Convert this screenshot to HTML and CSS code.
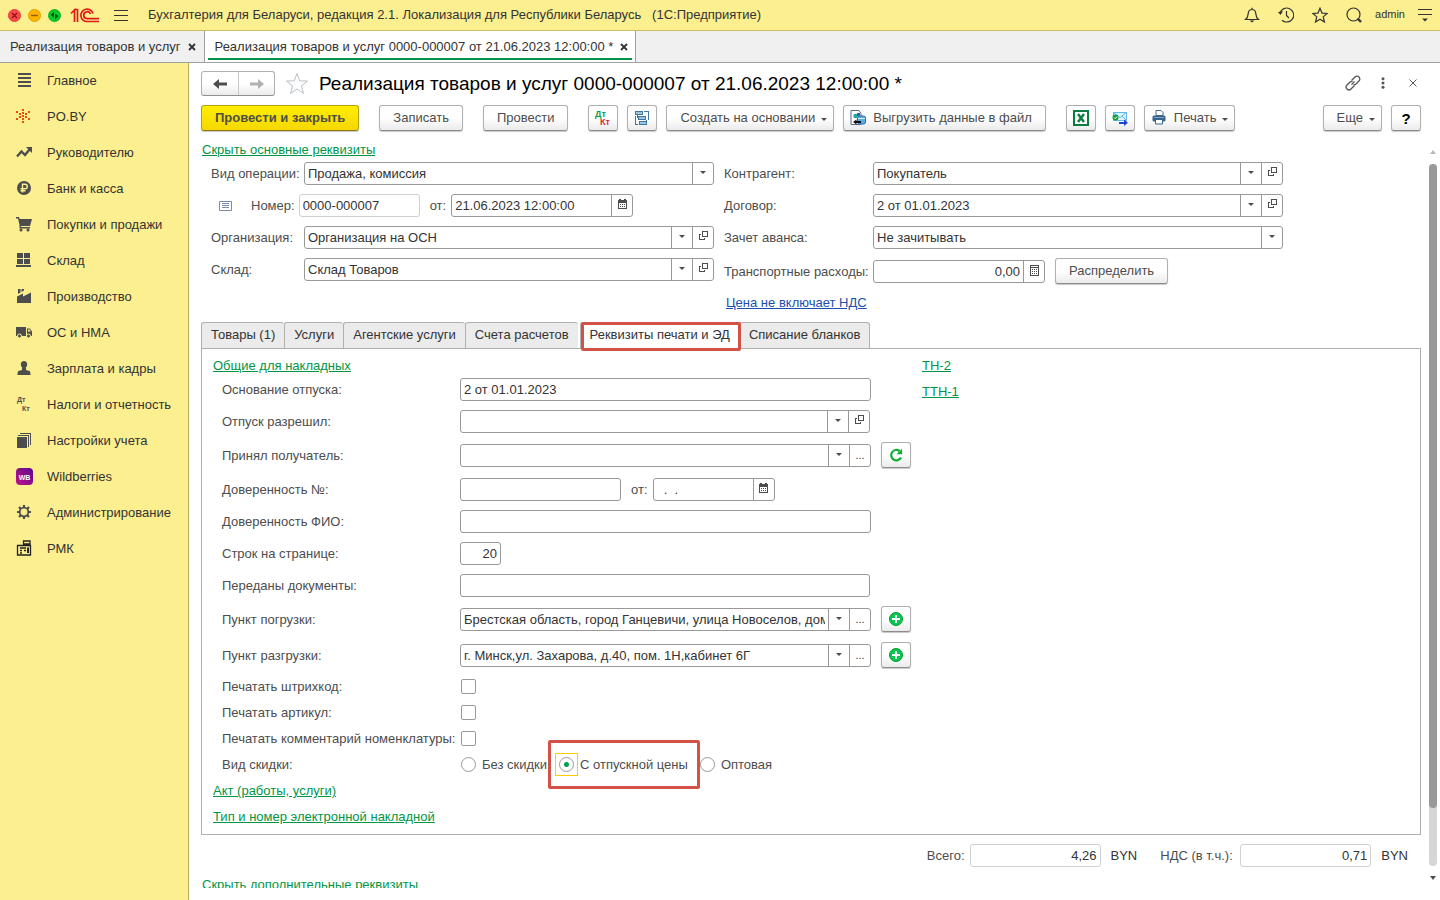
FILE: index.html
```html
<!DOCTYPE html>
<html lang="ru">
<head>
<meta charset="utf-8">
<title>Бухгалтерия для Беларуси</title>
<link rel="stylesheet" href="styles.css">
</head>
<body>
<svg class="sprite" aria-hidden="true">
  <symbol id="i-open" viewBox="0 0 11 11"><g fill="none" stroke="#4d4d4d" shape-rendering="crispEdges"><path d="M4.500 .5h5v5h-5z"/><path d="M3 3.500H1.500v5h5V7"/></g></symbol>
  <symbol id="i-cal" viewBox="0 0 11 11"><g shape-rendering="crispEdges"><path fill="#4d4d4d" d="M1 1h9v9H1z"/><path fill="#fff" d="M2 4h7v5H2zM4 0h1v1H4z"/><path fill="#4d4d4d" d="M2 0h2v2H2zM7 0h2v2H7zM3 5h1v1H3zM5 5h1v1H5zM7 5h1v1H7zM3 7h1v1H3zM5 7h1v1H5zM7 7h1v1H7z"/></g></symbol>
  <symbol id="i-calc" viewBox="0 0 11 11"><g shape-rendering="crispEdges"><path fill="#4d4d4d" d="M1 0h9v11H1z"/><path fill="#fff" d="M2 1h7v1H2zM2 3h7v7H2z"/><path fill="#4d4d4d" d="M3 4h1v1H3zM5 4h1v1H5zM7 4h1v1H7zM3 6h1v1H3zM5 6h1v1H5zM7 6h1v1H7zM3 8h1v1H3zM5 8h1v1H5zM7 8h1v1H7z"/></g></symbol>
  <symbol id="i-plus" viewBox="0 0 14 14"><circle cx="7" cy="7" r="6.500" fill="#00c853" stroke="#0a9a2a"/><path d="M7 3v8M3 7h8" stroke="#fff" stroke-width="2"/></symbol>
</svg>

<div class="app">
  <header class="topbar">
    <div class="lights">
      <button class="light" aria-label="Закрыть окно"><svg width="13" height="13" viewBox="0 0 13 13"><circle cx="6.500" cy="6.500" r="6" fill="#fc4a4a" stroke="#e03c3c"/><path d="M4 4l5 5M9 4l-5 5" stroke="#8f1010" stroke-width="1.200"/></svg></button>
      <button class="light" aria-label="Свернуть окно"><svg width="13" height="13" viewBox="0 0 13 13"><circle cx="6.500" cy="6.500" r="6" fill="#ffb400" stroke="#e29c00"/><path d="M3 6.500h7" stroke="#946000" stroke-width="1.500"/></svg></button>
      <button class="light" aria-label="Развернуть окно"><svg width="13" height="13" viewBox="0 0 13 13"><circle cx="6.500" cy="6.500" r="6" fill="#0ecb2c" stroke="#0ab022"/><path d="M6 2.500v6L2.500 6zM7 10.500v-6l3.500 2.500z" fill="#005c0a"/></svg></button>
    </div>
    <svg class="logo" width="30" height="15" viewBox="0 0 30 15"><g fill="none" stroke="#e01a1a" stroke-width="1.700"><path d="M1 5.500L4.500 2v12M4 1.500h3.500V14"/><path d="M23 5.500A6.200 6.200 0 1 0 17.300 13.500H29"/><path d="M20.500 6A3.500 3.500 0 1 0 17.300 10.700H29"/></g></svg>
    <button class="burger" aria-label="Меню"><svg width="14" height="11" viewBox="0 0 14 11"><path d="M0 .5h14M0 5.500h14M0 10.500h14" stroke="#333" shape-rendering="crispEdges"/></svg></button>
    <span class="app-title">Бухгалтерия для Беларуси, редакция 2.1. Локализация для Республики Беларусь &nbsp; (1С:Предприятие)</span>
    <nav class="top-icons">
      <button aria-label="Уведомления"><svg width="16" height="16" viewBox="0 0 16 16"><path d="M1.500 12.500C4 10.500 4 9 4.200 6.500 4.400 4 6 2.500 8 2.500s3.600 1.500 3.800 4C12 9 12 10.500 14.500 12.500zM8 .8v1.700" fill="none" stroke="#333" stroke-width="1.200"/><path d="M5.500 13.500h5L8 15.500z" fill="#333"/></svg></button>
      <button aria-label="История"><svg width="16" height="16" viewBox="1 0 16 16"><path d="M3 6A7 7 0 1 1 5 13.200M9.500 4v4.500l2.500 2.500" fill="none" stroke="#333" stroke-width="1.200"/><path d="M1 5l5-.7L3.500 8z" fill="#333"/></svg></button>
      <button aria-label="Избранное"><svg width="16" height="16" viewBox="0 0 16 16"><path d="M8 1.200l2 4.900 5.200.4-4 3.400 1.300 5.100L8 12.200 3.500 15l1.300-5.100-4-3.400L6 6.100z" fill="none" stroke="#333" stroke-width="1.200"/></svg></button>
      <button aria-label="Поиск"><svg width="16" height="16" viewBox="0 0 16 16"><circle cx="7.500" cy="7.500" r="6.500" fill="none" stroke="#333" stroke-width="1.200"/><path d="M11.500 11.500l3.500 3.500" stroke="#333" stroke-width="2.400"/></svg></button>
      <span class="user">admin</span>
      <button aria-label="Настройки"><svg width="14" height="14" viewBox="0 0 14 14"><path d="M0 1.500h14M0 6.500h14" stroke="#333" shape-rendering="crispEdges"/><path d="M4 10.500h6l-3 3z" fill="#333"/></svg></button>
    </nav>
  </header>

  <div class="window-tabs">
    <div class="wtab">Реализация товаров и услуг<button class="x" aria-label="Закрыть вкладку"><svg width="8" height="8" viewBox="0 0 8 8"><path d="M1 1l6 6M7 1L1 7" stroke="#333" stroke-width="1.800"/></svg></button></div>
    <div class="wtab active">Реализация товаров и услуг 0000-000007 от 21.06.2023 12:00:00 *<button class="x" aria-label="Закрыть вкладку"><svg width="8" height="8" viewBox="0 0 8 8"><path d="M1 1l6 6M7 1L1 7" stroke="#333" stroke-width="1.800"/></svg></button></div>
  </div>

  <div class="workspace">
    <nav class="sidebar">
      <a href="#"><svg viewBox="0 0 18 18"><path d="M3 3h13M3 7h13M3 11h13M3 15h13" stroke="#4d4d4d" stroke-width="2" shape-rendering="crispEdges"/></svg>Главное</a>
      <a href="#"><svg viewBox="0 0 18 18"><path fill="#e8500a" shape-rendering="crispEdges" d="M7 2h2v2H7zM7 5h2v2H7zM7 8h2v2H7zM7 11h2v2H7zM7 14h2v2H7zM1 4h2v2H1zM13 4h2v2h-2zM1 11h2v2H1zM13 11h2v2h-2zM4 6h2v2H4zM10 6h2v2h-2zM4 9h2v2H4zM10 9h2v2h-2z"/></svg>PO.BY</a>
      <a href="#"><svg viewBox="0 0 18 18"><path d="M2 13.500l4.500-5 3.500 3.500 4.500-5.500" fill="none" stroke="#4d4d4d" stroke-width="2.400"/><path d="M11 4h6v6z" fill="#4d4d4d"/></svg>Руководителю</a>
      <a href="#"><svg viewBox="0 0 18 18"><circle cx="9" cy="9" r="7" fill="#4d4d4d"/><path d="M7.500 13.500V5.200h2.500a2.300 2.300 0 0 1 0 4.600H5.500M5.500 11.800h5" fill="none" stroke="#fcef90" stroke-width="1.400"/></svg>Банк и касса</a>
      <a href="#"><svg viewBox="0 0 18 18"><path d="M1 2h3l.7 2H17l-2 7H6v1h9v1.500H4.500V10L3 3.500H1z" fill="#4d4d4d"/><circle cx="6" cy="15" r="1.500" fill="#4d4d4d"/><circle cx="13" cy="15" r="1.500" fill="#4d4d4d"/></svg>Покупки и продажи</a>
      <a href="#"><svg viewBox="0 0 18 18"><path fill="#4d4d4d" shape-rendering="crispEdges" d="M2 2h6v5H2zM9 2h6v5H9zM2 8h6v5H2zM9 8h6v5H9zM1 14h15v2H1z"/></svg>Склад</a>
      <a href="#"><svg viewBox="0 0 18 18"><path fill="#4d4d4d" d="M2 16V9.500l6-3v3l8-4V16zM3 2h2.500v3.500L3 7zM6.500 2H9v1.500L6.500 5z"/></svg>Производство</a>
      <a href="#"><svg viewBox="0 0 18 18"><path fill="#4d4d4d" d="M1 4h10v9H1zM12 5.500h3l2 3V13h-5z"/><path fill="#fcef90" d="M13 6.500h1.600l1.200 2H13z"/><g fill="#4d4d4d" stroke="#fcef90"><circle cx="4.500" cy="13" r="2"/><circle cx="13.500" cy="13" r="2"/></g></svg>ОС и НМА</a>
      <a href="#"><svg viewBox="0 0 18 18"><path fill="#4d4d4d" d="M9 2c2 0 3.200 1.400 3.200 3.200S11 9.500 9 9.500 5.800 7 5.800 5.200 7 2 9 2zM7 9h4v2l3.500 1c.8.500 1 2 1 4h-13c0-2 .2-3.500 1-4L7 11z"/></svg>Зарплата и кадры</a>
      <a href="#"><svg viewBox="0 0 18 18"><g font-family="Liberation Sans" font-size="7" font-weight="bold" fill="#4d4d4d"><text x="2" y="7">Дт</text><text x="7" y="16">Кт</text></g></svg>Налоги и отчетность</a>
      <a href="#"><svg viewBox="0 0 18 18"><path fill="#4d4d4d" d="M2 6h10v11H2z"/><path d="M3 4.500h10.500V16M5 2.500h10.500V14" fill="none" stroke="#4d4d4d" shape-rendering="crispEdges"/></svg>Настройки учета</a>
      <a href="#"><svg viewBox="0 0 18 18"><linearGradient id="wb" x1="0" y1="1" x2="1" y2="0"><stop offset="0" stop-color="#c0108c"/><stop offset="1" stop-color="#5a0a8c"/></linearGradient><rect x="1" y="1" width="17" height="17" rx="4" fill="url(#wb)"/><text x="9.500" y="12.500" text-anchor="middle" font-family="Liberation Sans" font-size="7" font-weight="bold" fill="#fff">WB</text></svg>Wildberries</a>
      <a href="#"><svg viewBox="0 0 18 18"><circle cx="9" cy="9" r="4.300" fill="none" stroke="#4d4d4d" stroke-width="1.800"/><path d="M9 2v2.500M9 13.500V16M2 9h2.500M13.500 9H16M4 4l2 2M12 12l2 2M14 4l-2 2M6 12l-2 2" stroke="#4d4d4d" stroke-width="2.200"/></svg>Администрирование</a>
      <a href="#"><svg viewBox="0 0 18 18"><g fill="none" stroke="#222" stroke-width="1.300"><path d="M2.500 6.500h13v9.500h-13zM8.500 2h6.500v3H8.500zM11.500 5v1.500"/><path d="M5 9h6M5 11.500h2M5 14h2M9 11.500h2"/></g><path fill="#222" d="M12 8.500h2V14h-2z"/></svg>РМК</a>
    </nav>

    <main class="doc">
      <div class="doc-head">
        <div class="history">
          <button aria-label="Назад"><svg width="14" height="10" viewBox="0 0 14 10"><path d="M0 5l6-5v3.500h8v3H6V10z" fill="#4d4d4d"/></svg></button>
          <button aria-label="Вперед"><svg width="14" height="10" viewBox="0 0 14 10"><path d="M14 5L8 0v3.500H0v3h8V10z" fill="#b0b0b0"/></svg></button>
        </div>
        <button class="fav" aria-label="В избранное"><svg width="24" height="23" viewBox="0 0 24 23"><path d="M12 1.500l2.700 7.300 7.800.3-6.100 4.800 2.100 7.500L12 17l-6.500 4.400 2.100-7.500-6.100-4.800 7.800-.3z" fill="none" stroke="#b8c0c8"/></svg></button>
        <h1>Реализация товаров и услуг 0000-000007 от 21.06.2023 12:00:00 *</h1>
        <div class="head-actions">
          <button aria-label="Ссылка"><svg width="16" height="16" viewBox="0 0 16 16"><g fill="none" stroke="#555" stroke-width="1.300"><path d="M6.500 5.500L10 2a2.800 2.800 0 0 1 4 4l-3 3a2.800 2.800 0 0 1-2.500.6"/><path d="M9.500 10.500L6 14a2.800 2.800 0 0 1-4-4l3-3a2.800 2.800 0 0 1 2.500-.6M6.500 9.500l3-3"/></g></svg></button>
          <button aria-label="Еще"><svg width="4" height="12" viewBox="0 0 4 12"><g fill="#555"><circle cx="2" cy="1.700" r="1.500"/><circle cx="2" cy="6" r="1.500"/><circle cx="2" cy="10.300" r="1.500"/></g></svg></button>
          <button aria-label="Закрыть"><svg width="8" height="8" viewBox="0 0 8 8"><path d="M.5.5l7 7M7.500.5l-7 7" stroke="#555"/></svg></button>
        </div>
      </div>

      <div class="commands">
        <div class="cmd-group"><button class="btn primary">Провести и закрыть</button></div>
        <div class="cmd-group"><button class="btn">Записать</button></div>
        <div class="cmd-group"><button class="btn">Провести</button></div>
        <div class="cmd-group">
          <button class="btn icon" aria-label="Проводки"><svg width="18" height="18" viewBox="0 0 18 18"><g font-family="Liberation Sans" font-size="9" font-weight="bold"><text x="1" y="8" fill="#0a9a48">Дт</text><text x="6" y="16" fill="#e02a2a">Кт</text></g></svg></button>
          <button class="btn icon" aria-label="Структура подчиненности"><svg width="16" height="16" viewBox="0 0 16 16"><g fill="#9cc4e0" stroke="#3a78a8" shape-rendering="crispEdges"><path d="M1.500 1.500h7v3h-7zM4.500 6.500h7v3h-7zM5.500 11.500h7v3h-7z"/><path d="M10 1.500h4.500V10M1.500 6v8.500H4M3.500 4.500v3M12.500 9.500v2" fill="none"/></g></svg></button>
          <button class="btn menu">Создать на основании<i class="caret"></i></button>
          <button class="btn pic"><svg width="16" height="17" viewBox="0 0 16 17"><path d="M1 1.500h8l2 3v11H1z" fill="#fff" stroke="#5a6a80"/><circle cx="5.500" cy="7" r="2.200" fill="#1fa6a0"/><path d="M7 4h3v3H7z" fill="#2468b0"/><rect x="7.500" y="7" width="8" height="8" rx="2" fill="#5aaee6" stroke="#2a6ea8"/><path d="M8 9.500h7" stroke="#d8efff"/><path d="M3 13l3.500-2.500V12H11v2H6.500v1.500z" fill="#111"/></svg>Выгрузить данные в файл</button>
        </div>
        <div class="cmd-group">
          <button class="btn icon" aria-label="Excel"><svg width="16" height="16" viewBox="0 0 16 16"><rect x="1" y="1" width="14" height="14" fill="#fff" stroke="#0b7d3e" stroke-width="2"/><path d="M5 4l6 8M11 4l-6 8" stroke="#0b7d3e" stroke-width="2.400"/></svg></button>
          <button class="btn icon" aria-label="Отправить"><svg width="16" height="16" viewBox="0 0 16 16"><path d="M1.500 2.500h13v8h-13z" fill="#dff2ff" stroke="#5cb8ee"/><path d="M1.500 2.500l6.500 5 6.500-5M2 10l4-4M14 10l-4-4" fill="none" stroke="#5cb8ee"/><circle cx="3.500" cy="7.500" r="3" fill="#12a03c"/><path d="M2 7.500l1.200 1.200L5.200 6.500" fill="none" stroke="#fff"/><path d="M7 12h5V9.500l4 3.200-4 3.300V14H7z" fill="#1a46d0"/></svg></button>
          <button class="btn pic menu"><svg width="16" height="15" viewBox="0 0 16 15"><path d="M5 .5h5l2 2v3H5z" fill="#fff" stroke="#4a6480"/><rect x="1.500" y="5.500" width="13" height="6" rx="1.500" fill="#36648c"/><path d="M4.500 9.500h7v4.500h-7z" fill="#fff" stroke="#36648c"/><path d="M3 7.500h10" stroke="#7fa6c6"/></svg>Печать<i class="caret"></i></button>
        </div>
        <div class="cmd-group end">
          <button class="btn menu">Еще<i class="caret"></i></button>
          <button class="btn icon help" aria-label="Справка">?</button>
        </div>
      </div>

      <div class="body">
        <div class="content">
          <a class="link" href="#">Скрыть основные реквизиты</a>

          <div class="main-form">
            <div class="col">
              <div class="row"><label for="op">Вид операции:</label>
                <div class="box w-main"><select id="op"><option>Продажа, комиссия</option></select><span class="cell over"><i class="caret"></i></span></div></div>
              <div class="row number-row">
                <svg class="status" width="13" height="10" viewBox="0 0 13 10"><path d="M.5.5h12v9H.5z" fill="#fff" stroke="#7a8ca8"/><path d="M3 2.500h7M3 4.500h7M3 6.500h7" stroke="#7a8ca8" shape-rendering="crispEdges"/></svg>
                <label for="num">Номер:</label>
                <div class="box w-number faint"><input id="num" value="0000-000007"></div>
                <label for="date" class="from">от:</label>
                <div class="box w-date"><input id="date" value="21.06.2023 12:00:00"><button class="cell" aria-label="Календарь"><svg width="11" height="11"><use href="#i-cal"/></svg></button></div>
              </div>
              <div class="row"><label for="org">Организация:</label>
                <div class="box w-main"><input id="org" value="Организация на ОСН"><button class="cell" aria-label="Выбрать"><i class="caret"></i></button><button class="cell" aria-label="Открыть"><svg width="11" height="11"><use href="#i-open"/></svg></button></div></div>
              <div class="row"><label for="store">Склад:</label>
                <div class="box w-main"><input id="store" value="Склад Товаров"><button class="cell" aria-label="Выбрать"><i class="caret"></i></button><button class="cell" aria-label="Открыть"><svg width="11" height="11"><use href="#i-open"/></svg></button></div></div>
            </div>
            <div class="col right">
              <div class="row"><label for="agent">Контрагент:</label>
                <div class="box w-main"><input id="agent" value="Покупатель"><button class="cell" aria-label="Выбрать"><i class="caret"></i></button><button class="cell" aria-label="Открыть"><svg width="11" height="11"><use href="#i-open"/></svg></button></div></div>
              <div class="row"><label for="contract">Договор:</label>
                <div class="box w-main"><input id="contract" value="2 от 01.01.2023"><button class="cell" aria-label="Выбрать"><i class="caret"></i></button><button class="cell" aria-label="Открыть"><svg width="11" height="11"><use href="#i-open"/></svg></button></div></div>
              <div class="row"><label for="advance">Зачет аванса:</label>
                <div class="box w-main"><select id="advance"><option>Не зачитывать</option></select><span class="cell over"><i class="caret"></i></span></div></div>
              <div class="row tall"><label for="transport">Транспортные расходы:</label>
                <div class="box w-cost"><input id="transport" class="num" value="0,00"><button class="cell" aria-label="Калькулятор"><svg width="11" height="11"><use href="#i-calc"/></svg></button></div>
                <button class="btn after">Распределить</button></div>
              <div class="row text"><a class="link blue" href="#">Цена не включает НДС</a></div>
            </div>
          </div>

          <div class="tabs" role="tablist">
            <button role="tab">Товары (1)</button>
            <button role="tab">Услуги</button>
            <button role="tab">Агентские услуги</button>
            <button role="tab">Счета расчетов</button>
            <button role="tab" class="current" aria-selected="true">Реквизиты печати и ЭД<span class="mark"></span></button>
            <button role="tab">Списание бланков</button>
          </div>

          <section class="panel">
            <div class="panel-main">
              <a class="link" href="#">Общие для накладных</a>
              <div class="rows">
                <div class="row"><label for="f1">Основание отпуска:</label><div class="box w-wide"><input id="f1" value="2 от 01.01.2023"></div></div>
                <div class="row"><label for="f2">Отпуск разрешил:</label><div class="box w-main"><input id="f2"><button class="cell" aria-label="Выбрать"><i class="caret"></i></button><button class="cell" aria-label="Открыть"><svg width="11" height="11"><use href="#i-open"/></svg></button></div></div>
                <div class="row tall"><label for="f3">Принял получатель:</label><div class="box w-wide"><input id="f3"><button class="cell" aria-label="Выбрать"><i class="caret"></i></button><button class="cell dots" aria-label="Подробнее">...</button></div>
                  <button class="btn icon after" aria-label="Обновить"><svg width="14" height="14" viewBox="0 0 14 14"><path d="M12 9.500A5.200 5.200 0 1 1 10.500 3" fill="none" stroke="#0bb02c" stroke-width="2.200"/><path d="M13 .8v5.500H7.500z" fill="#0bb02c"/></svg></button></div>
                <div class="row"><label for="f4">Доверенность №:</label><div class="box w-proxy"><input id="f4"></div><label for="f4d" class="from">от:</label><div class="box w-short"><input id="f4d" value="  .  ."><button class="cell" aria-label="Календарь"><svg width="11" height="11"><use href="#i-cal"/></svg></button></div></div>
                <div class="row"><label for="f5">Доверенность ФИО:</label><div class="box w-wide"><input id="f5"></div></div>
                <div class="row"><label for="f6">Строк на странице:</label><div class="box w-lines"><input id="f6" class="num" value="20"></div></div>
                <div class="row"><label for="f7">Переданы документы:</label><div class="box w-main"><input id="f7"></div></div>
                <div class="row tall"><label for="f8">Пункт погрузки:</label><div class="box w-wide"><input id="f8" value="Брестская область, город Ганцевичи, улица Новоселов, дом 1"><button class="cell" aria-label="Выбрать"><i class="caret"></i></button><button class="cell dots" aria-label="Подробнее">...</button></div>
                  <button class="btn icon after" aria-label="Добавить"><svg width="14" height="14"><use href="#i-plus"/></svg></button></div>
                <div class="row tall"><label for="f9">Пункт разгрузки:</label><div class="box w-wide"><input id="f9" value="г. Минск,ул. Захарова, д.40, пом. 1Н,кабинет 6Г"><button class="cell" aria-label="Выбрать"><i class="caret"></i></button><button class="cell dots" aria-label="Подробнее">...</button></div>
                  <button class="btn icon after" aria-label="Добавить"><svg width="14" height="14"><use href="#i-plus"/></svg></button></div>
                <div class="row text"><label for="c1">Печатать штрихкод:</label><input id="c1" type="checkbox"></div>
                <div class="row text"><label for="c2">Печатать артикул:</label><input id="c2" type="checkbox"></div>
                <div class="row text"><label for="c3">Печатать комментарий номенклатуры:</label><input id="c3" type="checkbox"></div>
                <div class="row text" role="radiogroup" aria-labelledby="disc"><span class="caption" id="disc">Вид скидки:</span>
                  <div class="radios">
                    <label><span class="dot"><input type="radio" name="disc"></span>Без скидки</label>
                    <label class="marked"><span class="dot focus"><input type="radio" name="disc" checked></span>С отпускной цены<span class="mark"></span></label>
                    <label><span class="dot"><input type="radio" name="disc"></span>Оптовая</label>
                  </div></div>
              </div>
              <div class="more-links">
                <a class="link" href="#">Акт (работы, услуги)</a>
                <a class="link" href="#">Тип и номер электронной накладной</a>
              </div>
            </div>
            <div class="panel-side">
              <a class="link" href="#">ТН-2</a>
              <a class="link" href="#">ТТН-1</a>
            </div>
          </section>

          <div class="totals">
            <label for="sum">Всего:</label><div class="box w-total faint"><input id="sum" class="num" value="4,26" readonly></div><span class="cur">BYN</span>
            <label for="vat">НДС (в т.ч.):</label><div class="box w-total faint"><input id="vat" class="num" value="0,71" readonly></div><span class="cur">BYN</span>
          </div>
          <a class="link" href="#">Скрыть дополнительные реквизиты</a>
        </div>

        <div class="scroll" aria-hidden="true">
          <i class="up"></i>
          <div class="track"><div class="thumb"></div></div>
          <i class="down"></i>
        </div>
      </div>
    </main>
  </div>
</div>
</body>
</html>
```
FILE: styles.css
```css
* { box-sizing: border-box; }
body, button, input, select { font: 13px/17px "Liberation Sans", Arial, sans-serif; color: #333; }
body { margin: 0; background: #fff; }
button { margin: 0; padding: 0; border: 0; background: none; display: inline-flex; align-items: center; justify-content: center; white-space: nowrap; flex: none; }
svg { display: block; flex: none; }
.sprite { position: absolute; width: 0; height: 0; }
.app { height: 100vh; display: flex; flex-direction: column; overflow: hidden; }

.topbar { height: 31px; flex: none; display: flex; align-items: center; padding: 0 8px; background: #fcef90; border-bottom: 1px solid #c9bd62; }
.lights { display: flex; gap: 7px; }
.logo { margin-left: 9px; }
.burger { margin-left: 14px; }
.app-title { margin-left: 20px; padding-bottom: 2px; white-space: nowrap; }
.top-icons { margin-left: auto; display: flex; align-items: center; gap: 18px; }
.user { font-size: 11px; margin: 0 -5px; padding-bottom: 2px; }

.window-tabs { height: 32px; flex: none; display: flex; background: #f0f0f0; border-bottom: 1px solid #a0a0a0; }
.wtab { display: flex; align-items: center; padding: 0 8px 0 10px; border-right: 1px solid #a0a0a0; white-space: nowrap; }
.wtab .x { margin-left: 7px; }
.wtab.active { padding-right: 7px; background: linear-gradient(#009646, #009646) 3px 27px / calc(100% - 6px) 2px no-repeat #fff; }

.workspace { flex: 1; min-height: 0; display: flex; }
.sidebar { width: 189px; flex: none; background: #fcef90; border-right: 1px solid #b8ae5c; }
.sidebar a { display: flex; align-items: center; gap: 14px; height: 36px; padding: 0 0 2px 15px; color: #333; text-decoration: none; white-space: nowrap; }
.sidebar svg { width: 18px; height: 18px; }

.doc { flex: 1; min-width: 0; display: flex; flex-direction: column; padding: 8px 0 12px 12px; }
.doc-head { display: flex; align-items: center; height: 25px; padding-right: 12px; }
.history { display: flex; border: 1px solid #b0b0b0; border-bottom-color: #909090; border-radius: 3px; background: linear-gradient(#fff 50%, #ebebeb); }
.history button { width: 36px; height: 23px; }
.history button + button { border-left: 1px solid #c8c8c8; }
.fav { margin: 0 10px; }
h1 { margin: 0; font-size: 19px; line-height: 24px; font-weight: normal; color: #000; white-space: nowrap; }
.head-actions { margin-left: auto; padding-bottom: 2px; display: flex; align-items: center; }
.head-actions button { width: 30px; }

.commands { display: flex; gap: 20px; margin-top: 9px; padding-right: 19px; }
.cmd-group { display: flex; gap: 9px; }
.cmd-group.end { margin-left: auto; }
.btn { height: 26px; padding: 0 13px 2px; color: #4d4d4d; background: linear-gradient(#fff 50%, #ebebeb); border: 1px solid #b0b0b0; border-bottom-color: #8c8c8c; border-radius: 3px; box-shadow: 0 1px 1px #c8c8c8; }
.btn.primary { font-weight: bold; background: linear-gradient(#ffee00, #f5d800); border-color: #b8a010; border-bottom-color: #8c7a10; }
.btn.icon { width: 30px; padding: 0; }
.btn.menu { padding-right: 6px; }
.btn.menu .caret { margin: 4px 0 0 6px; }
.btn.pic { padding-left: 6px; }
.btn.pic svg { margin-right: 7px; }
.btn.help { color: #000; font-weight: bold; font-size: 15px; }
.caret { border: 3px solid transparent; border-top-color: #4d4d4d; border-bottom: 0; }

.body { flex: 1; min-height: 0; display: flex; justify-content: space-between; margin-top: 10px; }
.content { flex: 1; min-width: 0; overflow: hidden; }
.content > .link { display: block; width: max-content; margin-left: 1px; }
.link { color: #009646; text-decoration: underline; white-space: nowrap; }
.link.blue { color: #1a4fb0; }

.main-form { display: flex; gap: 10px; padding: 4px 0 0 10px; }
.col, .rows { display: flex; flex-direction: column; gap: 9px; }
.row { display: flex; align-items: center; height: 23px; color: #4d4d4d; white-space: nowrap; }
.row.tall { height: 27px; }
.row.text { height: 17px; }
.row > label:first-child { width: 93px; flex: none; }
.col.right .row > label:first-child { width: 149px; }
.col.right .link { margin-left: 2px; }
.row label.from { margin: 0 5px 0 10px; }
.number-row { padding-left: 8px; }
.number-row > label:nth-child(2) { margin: 0 4px 0 19px; }

.box { position: relative; display: flex; height: 23px; flex: none; overflow: hidden; background: #fff; border: 1px solid #999; border-radius: 3px; }
.box.faint { border-color: #d0d0d0; }
.box input, .box select { flex: 1; min-width: 0; width: 100%; padding: 0 3px; border: 0; outline: 0; background: none; appearance: none; }
.box .num { text-align: right; }
.cell { width: 21px; padding-bottom: 2px; border-left: 1px solid #999; display: flex; align-items: center; justify-content: center; }
.cell.over { position: absolute; top: 0; right: 0; height: 100%; pointer-events: none; }
.cell.dots { font-size: 11px; padding: 0; }
.w-main { width: 410px; }
.w-wide { width: 411px; }
.w-date { width: 182px; }
.w-cost { width: 172px; }
.w-total { width: 131px; }
.w-number { width: 121px; }
.w-short { width: 122px; }
.w-proxy { width: 161px; }
.w-lines { width: 41px; }
.btn.after { margin: 0 0 1px 10px; }

.tabs { display: flex; margin-top: 11px; }
.tabs button { position: relative; height: 26px; padding: 0 9px 2px; background: #ebebeb; border: 1px solid #b0b0b0; border-bottom: 0; border-right: 0; border-radius: 3px 3px 0 0; }
.tabs button:last-child { border-right: 1px solid #b0b0b0; }
.tabs .current { margin-left: 2px; background: #fff; }
.mark { position: absolute; inset: -1px -2px -3px 0; border: 3px solid #d35247; border-radius: 2px; pointer-events: none; }
.tabs .mark { z-index: 1; }
.tabs .current { z-index: 1; }

.panel { display: flex; margin-right: 8px; padding: 8px 11px 9px; border: 1px solid #b0b0b0; }
.panel-main { width: 709px; flex: none; }
.panel-main > .link, .panel-side .link, .more-links .link { display: block; width: max-content; }
.rows { margin-top: 4px; padding-left: 9px; }
.rows .row > label:first-child, .caption { width: 238px; flex: none; }
.more-links, .panel-side { display: flex; flex-direction: column; gap: 9px; }
.more-links { margin-top: 9px; }
input[type="checkbox"], input[type="radio"] { appearance: none; display: block; width: 15px; height: 15px; margin: 0; flex: none; border: 1px solid #999; border-radius: 2px; background: #fff; }
input[type="checkbox"] { margin-left: 1px; }
input[type="radio"] { border-radius: 50%; }
input[type="radio"]:checked { background: radial-gradient(circle, #00a04a 2px, #fff 3px); }
.dot { margin: 0 6px 0 1px; }
.focus { outline: 1px solid #ffcc00; outline-offset: 3px; }
.radios { display: flex; gap: 11px; }
.radios label { position: relative; display: flex; align-items: center; }
.marked .mark { inset: -16px -12px -16px -10px; }

.totals { display: flex; justify-content: flex-end; align-items: center; margin: 9px 21px 9px 0; color: #4d4d4d; }
.totals .box { margin: 0 10px 0 5px; }
.cur { color: #333; }
.cur + label { margin-left: 23px; min-width: 75px; }

.scroll { width: 8px; flex: none; display: flex; flex-direction: column; align-items: center; padding: 9px 0 8px; margin-right: 3px; }
.scroll i { border: 3px solid transparent; }
.scroll .up { border-top: 0; border-bottom: 4px solid #b8b8b8; }
.scroll .down { border-bottom: 0; border-top: 4px solid #4d4d4d; }
.track { flex: 1; width: 8px; margin: 10px 0; border-radius: 4px; background: #d6d6d6; display: flex; flex-direction: column; }
.track::after { content: ""; flex: 1; }
.thumb { flex: 11; border-radius: 4px; background: #999; }
```
